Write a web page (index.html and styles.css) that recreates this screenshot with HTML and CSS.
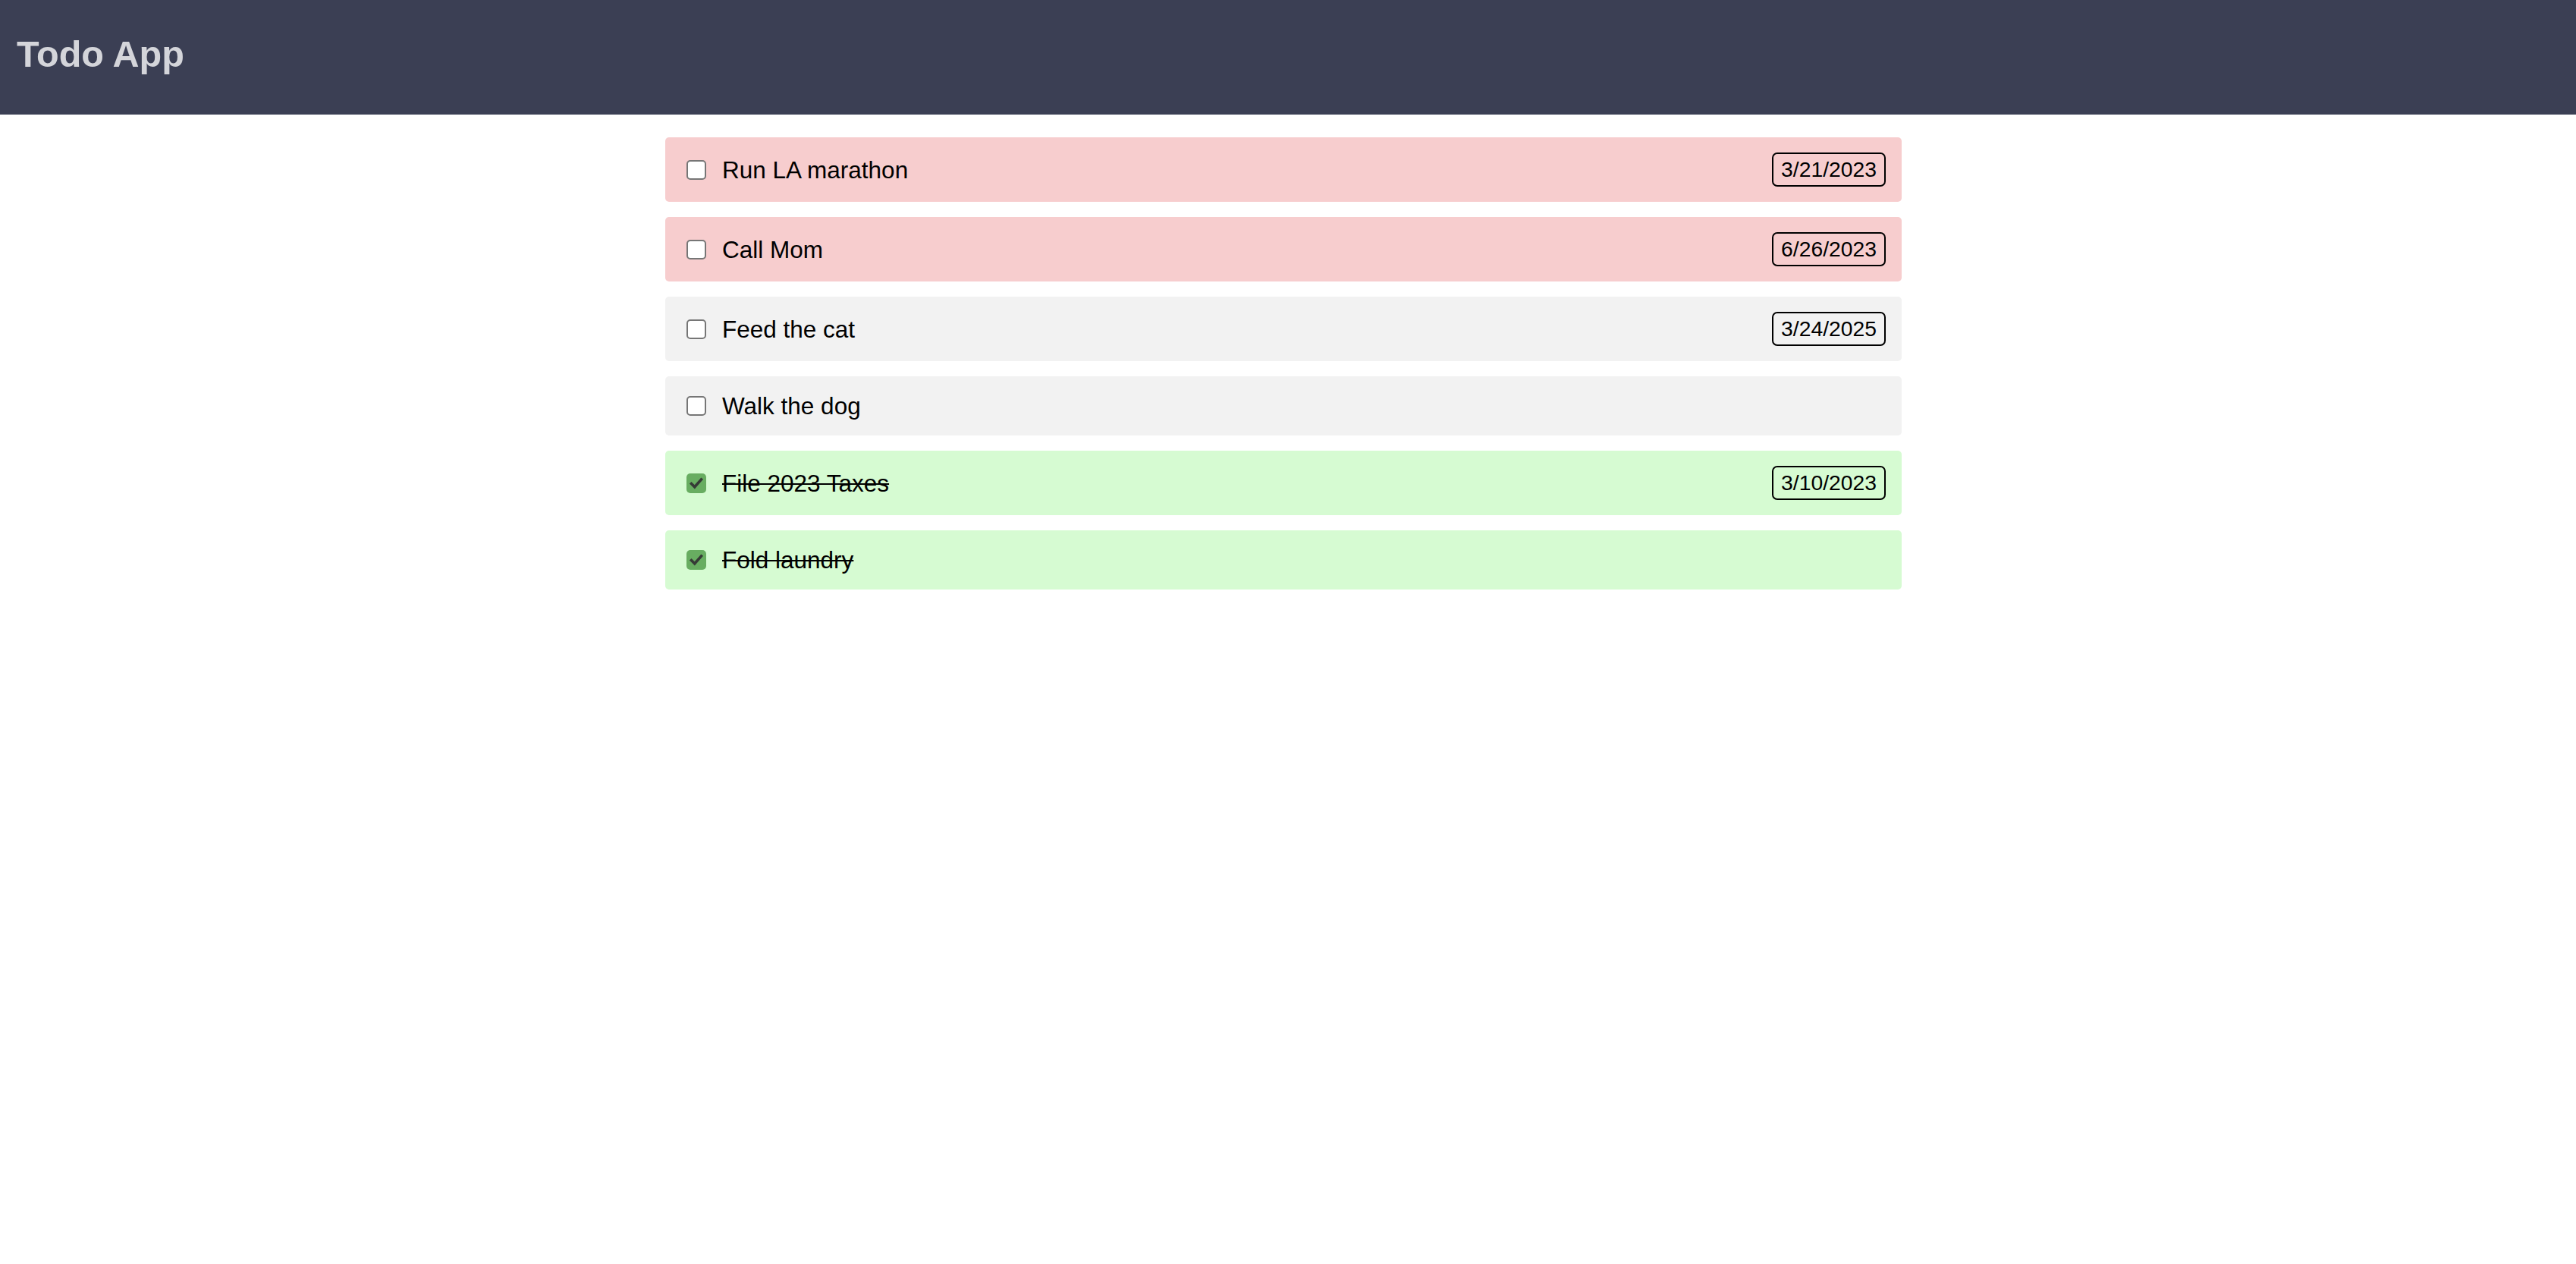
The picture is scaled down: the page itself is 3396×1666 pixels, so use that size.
FILE: index.html
```html
<!DOCTYPE html>
<html lang="en">
<head>
<meta charset="utf-8">
<title>Todo App</title>
<link rel="stylesheet" href="styles.css">
</head>
<body>
<header class="app-header">
  <h1 class="app-title">Todo App</h1>
</header>
<main class="app-main">
  <ul class="todo-list">
    <li class="todo todo--overdue">
      <span class="check" aria-hidden="true"></span>
      <span class="todo-text">Run LA marathon</span>
      <span class="todo-date">3/21/2023</span>
    </li>
    <li class="todo todo--overdue">
      <span class="check" aria-hidden="true"></span>
      <span class="todo-text">Call Mom</span>
      <span class="todo-date">6/26/2023</span>
    </li>
    <li class="todo">
      <span class="check" aria-hidden="true"></span>
      <span class="todo-text">Feed the cat</span>
      <span class="todo-date">3/24/2025</span>
    </li>
    <li class="todo">
      <span class="check" aria-hidden="true"></span>
      <span class="todo-text">Walk the dog</span>
    </li>
    <li class="todo todo--done">
      <span class="check check--on" aria-hidden="true"><svg viewBox="0 0 26 26" width="26" height="26"><path d="M6.5 13.5 L10.8 17.8 L19.5 8" fill="none" stroke="#363a36" stroke-width="3.6" stroke-linecap="square" stroke-linejoin="miter"/></svg></span>
      <span class="todo-text">File 2023 Taxes</span>
      <span class="todo-date">3/10/2023</span>
    </li>
    <li class="todo todo--done">
      <span class="check check--on" aria-hidden="true"><svg viewBox="0 0 26 26" width="26" height="26"><path d="M6.5 13.5 L10.8 17.8 L19.5 8" fill="none" stroke="#363a36" stroke-width="3.6" stroke-linecap="square" stroke-linejoin="miter"/></svg></span>
      <span class="todo-text">Fold laundry</span>
    </li>
  </ul>
</main>
</body>
</html>
```

FILE: styles.css
```css
* {
  box-sizing: border-box;
}

html, body {
  margin: 0;
  padding: 0;
  background: #ffffff;
  font-family: "Liberation Sans", Arial, sans-serif;
  color: #000000;
}

.app-header {
  height: 151px;
  background: #3b3f54;
  padding: 43px 22px 0;
}

.app-title {
  margin: 0;
  font-size: 48.5px;
  font-weight: 700;
  line-height: 56px;
  color: #d4d5da;
}

.app-main {
  display: flex;
  justify-content: center;
  padding: 30px 12px 0 0;
}

.todo-list {
  list-style: none;
  margin: 0;
  padding: 0;
  width: 1630px;
  display: flex;
  flex-direction: column;
  gap: 20px;
}

.todo {
  display: flex;
  align-items: center;
  padding: 20px 21px 20px 28px;
  border-radius: 5px;
  background: #f2f2f2;
}

.todo--overdue {
  background: #f7cdce;
}

.todo--done {
  background: #d6fbd2;
}

.check {
  flex: none;
  width: 26px;
  height: 26px;
  border: 2px solid #767676;
  border-radius: 5px;
  background: #ffffff;
  display: flex;
  align-items: center;
  justify-content: center;
}

.check--on {
  border: none;
  background: #68ad61;
}

.check svg {
  display: block;
}

.todo-text {
  flex: 1;
  margin-left: 21px;
  font-size: 31.5px;
  line-height: 38px;
}

.todo--done .todo-text {
  text-decoration: line-through;
  text-decoration-thickness: 2px;
}

.todo-date {
  flex: none;
  height: 45px;
  padding: 0 10px;
  border: 2px solid #000000;
  border-radius: 7px;
  font-size: 28.3px;
  line-height: 41px;
}
```
